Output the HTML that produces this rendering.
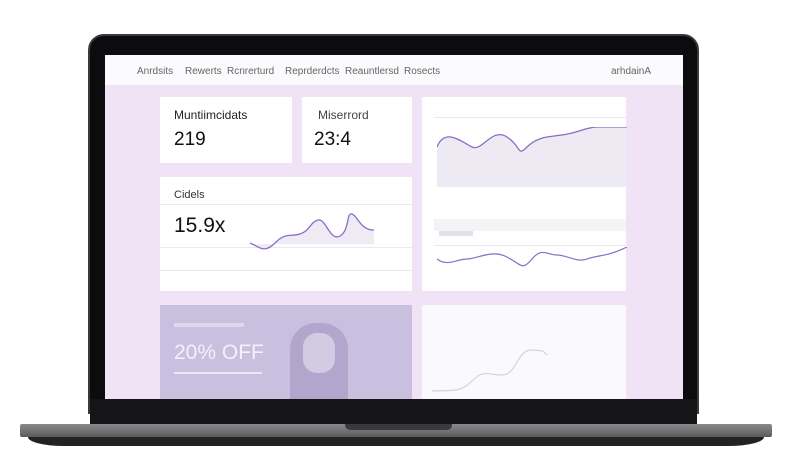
<!DOCTYPE html>
<html><head><style>
*{margin:0;padding:0;box-sizing:border-box}
body{width:800px;height:468px;background:#fff;position:relative;overflow:hidden;font-family:"Liberation Sans",sans-serif}
.lid{position:absolute;left:88px;top:34px;width:611px;height:380px;background:#0c0c0e;border-radius:16px 16px 0 0;border:2px solid #3a3a3c}
.screen{position:absolute;left:105px;top:55px;width:578px;height:344px;background:#efe3f5;overflow:hidden}
.nav{position:absolute;left:0;top:0;width:100%;height:30px;background:#fbfafc;font-size:10px;color:#666}
.nav span{position:absolute;top:11px}
.card{position:absolute;background:#fff;}
.lbl{position:absolute;font-size:12px;color:#222}
.num{position:absolute;font-size:19px;color:#111}
.base{position:absolute;left:20px;top:424px;width:752px;height:13px;background:linear-gradient(#8a8a8c,#5b5b5e);border-radius:2px}
.base2{position:absolute;left:28px;top:437px;width:736px;height:9px;background:#222;border-radius:0 0 40px 40px/0 0 10px 10px}
.notch{position:absolute;left:345px;top:424px;width:107px;height:6px;background:#3a3a3c;border-radius:0 0 5px 5px}
.strip{position:absolute;left:90px;top:399px;width:607px;height:25px;background:#151517}
</style></head><body>
<div class="lid"></div>
<div class="strip"></div>
<div class="screen">
 <div class="nav">
  <span style="left:32px">Anrdsits</span><span style="left:80px">Rewerts</span><span style="left:122px">Rcnrerturd</span><span style="left:180px">Reprderdcts</span><span style="left:240px">Reauntlersd</span><span style="left:299px">Rosects</span><span style="left:506px">arhdainA</span>
 </div>
 <div class="card" style="left:55px;top:42px;width:132px;height:66px"><div class="lbl" style="left:14px;top:11px">Muntiimcidats</div><div class="num" style="left:14px;top:32px">219</div></div>
 <div class="card" style="left:197px;top:42px;width:110px;height:66px"><div class="lbl" style="left:16px;top:11px;color:#444">Miserrord</div><div class="num" style="left:12px;top:32px">23:4</div></div>
 <div class="card" style="left:55px;top:122px;width:252px;height:114px">
  <div class="lbl" style="left:14px;top:12px;font-size:11px;color:#333">Cidels</div>
  <div style="position:absolute;left:0;top:27px;width:100%;height:1px;background:#ebe8ee"></div>
  <div class="num" style="left:14px;top:37px;font-size:21px">15.9x</div>
  <div style="position:absolute;left:0;top:70px;width:100%;height:1px;background:#ebe8ee"></div>
  <div style="position:absolute;left:0;top:93px;width:100%;height:1px;background:#ebe8ee"></div>
  <svg style="position:absolute;left:90px;top:35px" width="150" height="40"><path d="M0 31 C10 35 14 42 25 31 S40 25 50 22 S60 10 68 8 S80 30 90 24 S96 0 102 2 S110 18 124 18 L124 32 L0 32Z" fill="#efebf4"/><path d="M0 31 C10 35 14 42 25 31 S40 25 50 22 S60 10 68 8 S80 30 90 24 S96 0 102 2 S110 18 124 18" fill="none" stroke="#8a6cc9" stroke-width="1.3"/></svg>
 </div>
 <div class="card" style="left:317px;top:42px;width:204px;height:194px">
  <div style="position:absolute;left:12px;top:20px;right:0;height:1px;background:#ebe8ee"></div>
  <svg style="position:absolute;left:15px;top:30px" width="190" height="60"><path d="M0 20 C8 0 25 15 35 20 S55 0 70 10 S80 30 90 20 S110 10 125 8 S150 0 160 0 L190 0 L190 60 L0 60Z" fill="#eeeaf3"/><path d="M0 20 C8 0 25 15 35 20 S55 0 70 10 S80 30 90 20 S110 10 125 8 S150 0 160 0 L190 0" fill="none" stroke="#8a6cc9" stroke-width="1.3"/></svg>
  <div style="position:absolute;left:12px;top:122px;right:0;height:12px;background:#f4f3f6"></div>
  <div style="position:absolute;left:17px;top:134px;width:34px;height:5px;background:#e3e0e8"></div>
  <div style="position:absolute;left:12px;top:148px;right:0;height:1px;background:#ebe8ee"></div>
  <svg style="position:absolute;left:15px;top:150px" width="190" height="30"><path d="M0 12 C10 20 20 12 30 12 S55 2 70 10 S85 24 95 12 S110 8 120 8 S140 16 150 12 S170 10 190 0" fill="none" stroke="#8a6cc9" stroke-width="1.2"/></svg>
 </div>
 <div class="card" style="left:55px;top:250px;width:252px;height:94px;background:#c8c0de">
  <div style="position:absolute;left:14px;top:18px;width:70px;height:4px;background:#e8e3f2;opacity:.7"></div>
  <div style="position:absolute;left:14px;top:36px;font-size:21px;color:#f4f0fa">20% OFF</div>
  <div style="position:absolute;left:14px;top:67px;width:88px;height:2px;background:#ece8f4"></div>
  <div style="position:absolute;left:130px;top:18px;width:58px;height:80px;background:#b3a6cc;border-radius:26px 26px 0 0"></div>
  <div style="position:absolute;left:143px;top:28px;width:32px;height:40px;background:#d2cbe2;border-radius:14px"></div>
 </div>
 <div class="card" style="left:317px;top:250px;width:204px;height:94px;background:#fafafc">
  <svg style="position:absolute;left:10px;top:40px" width="190" height="50"><path d="M0 46 C20 45 28 48 40 36 S55 30 70 30 S85 4 100 5 S110 6 115 10" fill="none" stroke="#d6d2dd" stroke-width="1.2"/></svg>
 </div>
</div>
<div class="base"></div>
<div class="base2"></div>
<div class="notch"></div>
</body></html>
